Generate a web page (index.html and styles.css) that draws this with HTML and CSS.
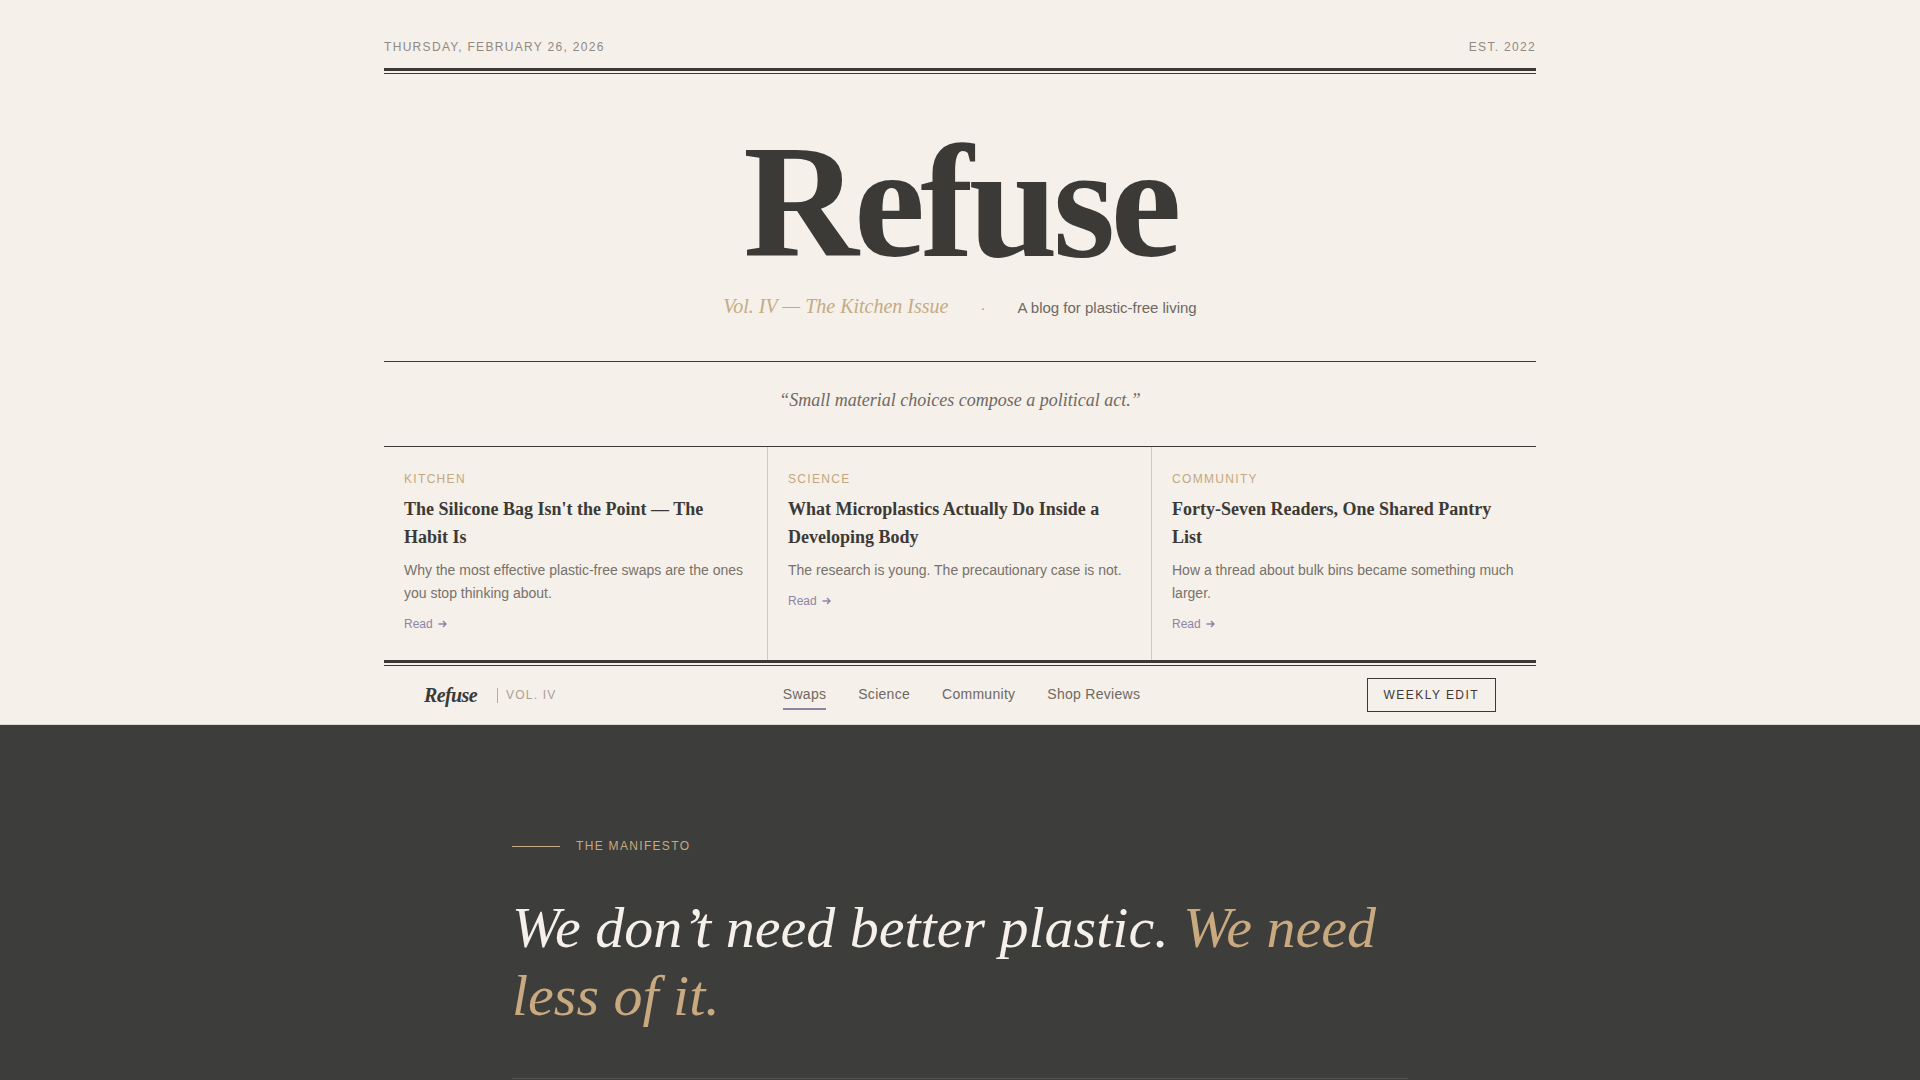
FILE: index.html
```html
<!DOCTYPE html>
<html lang="en">
<head>
  <meta charset="UTF-8" />
  <meta name="viewport" content="width=device-width, initial-scale=1.0" />
  <title>Refuse — A blog for plastic-free living</title>
  <link rel="stylesheet" href="styles.css">
</head>
<body>

  <header class="masthead">
    <div class="wrap">
      <div class="topline">
        <span>Thursday, February 26, 2026</span>
        <span>Est. 2022</span>
      </div>
      <div class="double-rule"></div>

      <h1 class="title">Refuse</h1>
      <p class="subtitle">
        <em class="issue">Vol. IV — The Kitchen Issue</em>
        <span class="dot">·</span>
        <span class="tagline">A blog for plastic-free living</span>
      </p>

      <p class="motto">“Small material choices compose a political act.”</p>

      <div class="featured">
        <article class="story">
          <span class="kicker">Kitchen</span>
          <h3>The Silicone Bag Isn't the Point — The Habit Is</h3>
          <p>Why the most effective plastic-free swaps are the ones you stop thinking about.</p>
          <a href="#" class="read">Read <svg class="arrow" viewBox="0 0 10 8" width="10" height="8"><path d="M0.5 4h7M5 1l3 3-3 3" fill="none" stroke="currentColor" stroke-width="1.4"/></svg></a>
        </article>
        <article class="story">
          <span class="kicker">Science</span>
          <h3>What Microplastics Actually Do Inside a Developing Body</h3>
          <p>The research is young. The precautionary case is not.</p>
          <a href="#" class="read">Read <svg class="arrow" viewBox="0 0 10 8" width="10" height="8"><path d="M0.5 4h7M5 1l3 3-3 3" fill="none" stroke="currentColor" stroke-width="1.4"/></svg></a>
        </article>
        <article class="story">
          <span class="kicker">Community</span>
          <h3>Forty-Seven Readers, One Shared Pantry List</h3>
          <p>How a thread about bulk bins became something much larger.</p>
          <a href="#" class="read">Read <svg class="arrow" viewBox="0 0 10 8" width="10" height="8"><path d="M0.5 4h7M5 1l3 3-3 3" fill="none" stroke="currentColor" stroke-width="1.4"/></svg></a>
        </article>
      </div>
      <div class="double-rule"></div>
    </div>
  </header>

  <nav class="navbar">
    <div class="wrap nav-inner">
      <div class="brand">
        <span class="brand-name">Refuse</span>
        <span class="brand-vol">Vol. IV</span>
      </div>
      <ul class="nav-links">
        <li><a href="#" class="active">Swaps</a></li>
        <li><a href="#">Science</a></li>
        <li><a href="#">Community</a></li>
        <li><a href="#">Shop Reviews</a></li>
      </ul>
      <a href="#" class="btn-outline">Weekly Edit</a>
    </div>
  </nav>

  <section class="manifesto">
    <div class="manifesto-inner">
      <div class="eyebrow">The Manifesto</div>
      <h2>We don’t need better plastic. <span>We need less of it.</span></h2>
      <div class="thin-rule"></div>
    </div>
  </section>

</body>
</html>
```
FILE: styles.css
```css
* {
  box-sizing: border-box;
}

body {
  margin: 0;
  background: #f5f0e9;
  color: #3b3a37;
  font-family: "Liberation Sans", Arial, sans-serif;
}

a {
  text-decoration: none;
  color: inherit;
}

.wrap {
  max-width: 1152px;
  margin: 0 auto;
}

/* masthead */
.masthead .wrap {
  padding-top: 40px;
}

.topline {
  display: flex;
  justify-content: space-between;
  font-size: 12px;
  line-height: 14px;
  letter-spacing: 0.11em;
  text-transform: uppercase;
  color: #8f8a83;
  margin-bottom: 14px;
}

.double-rule {
  height: 2px;
  border-top: 3px solid #3b3a37;
  border-bottom: 1px solid #3b3a37;
  box-sizing: content-box;
}

.title {
  margin: 48px 0 0;
  font-family: "Liberation Serif", "Times New Roman", serif;
  font-weight: bold;
  font-size: 160px;
  line-height: 160px;
  letter-spacing: -0.03em;
  text-align: center;
  color: #3b3a37;
}

.subtitle {
  display: flex;
  justify-content: center;
  align-items: baseline;
  gap: 32px;
  margin: 10px 0 0;
  padding-bottom: 39px;
  line-height: 28px;
}

.issue {
  font-family: "Liberation Serif", "Times New Roman", serif;
  font-size: 20px;
  color: #c4ab86;
}

.dot {
  font-size: 15px;
  color: #a09a92;
}

.tagline {
  font-size: 15px;
  color: #6e6963;
}

.motto {
  margin: 0;
  padding: 24px 0 32px;
  border-top: 1px solid #3b3a37;
  border-bottom: 1px solid #3b3a37;
  font-family: "Liberation Serif", "Times New Roman", serif;
  font-style: italic;
  font-size: 18px;
  line-height: 28px;
  text-align: center;
  color: #6e6963;
}

/* featured stories */
.featured {
  display: grid;
  grid-template-columns: repeat(3, 1fr);
}

.story {
  padding: 24px 20px 27px;
  border-right: 1px solid #cfc9bf;
}

.story:last-child {
  border-right: none;
}

.kicker {
  display: block;
  font-size: 12px;
  line-height: 16px;
  letter-spacing: 0.11em;
  text-transform: uppercase;
  color: #c2a880;
}

.story h3 {
  margin: 8px 0 0;
  font-family: "Liberation Serif", "Times New Roman", serif;
  font-size: 18px;
  line-height: 28px;
  font-weight: bold;
  color: #3b3a37;
}

.story p {
  margin: 8px 0 0;
  font-size: 14px;
  line-height: 23px;
  color: #77726c;
}

.read {
  display: inline-flex;
  align-items: center;
  gap: 5px;
  margin-top: 10px;
  font-size: 12px;
  line-height: 18px;
  color: #8e84a8;
}

.arrow {
  display: block;
}

/* nav */
.navbar {
  border-bottom: 1px solid #dcd6cc;
}

.nav-inner {
  display: flex;
  align-items: center;
  justify-content: space-between;
  padding: 12px 40px;
}

.brand {
  display: flex;
  align-items: center;
  gap: 20px;
}

.brand-name {
  font-family: "Liberation Serif", "Times New Roman", serif;
  font-weight: bold;
  font-style: italic;
  font-size: 20px;
  letter-spacing: -0.03em;
  color: #3b3a37;
}

.brand-vol {
  border-left: 1px solid #c4ab86;
  padding-left: 8px;
  font-size: 12px;
  line-height: 15px;
  letter-spacing: 0.1em;
  text-transform: uppercase;
  color: #a8a29a;
}

.nav-links {
  display: flex;
  gap: 32px;
  list-style: none;
  margin: 0;
  padding: 0;
}

.nav-links a {
  display: block;
  padding: 4px 0;
  border-bottom: 2px solid transparent;
  font-size: 14px;
  line-height: 20px;
  letter-spacing: 0.02em;
  color: #6e6963;
}

.nav-links a.active {
  border-bottom-color: #8e84a8;
}

.btn-outline {
  display: inline-block;
  padding: 8px 16px;
  border: 1px solid #3b3a37;
  font-size: 12px;
  line-height: 16px;
  letter-spacing: 0.12em;
  text-transform: uppercase;
  color: #3b3a37;
}

/* manifesto */
.manifesto {
  background: #3d3d3c;
  padding: 113px 0 112px;
}

.manifesto-inner {
  max-width: 896px;
  margin: 0 auto;
}

.eyebrow {
  display: flex;
  align-items: center;
  gap: 16px;
  font-size: 12px;
  line-height: 16px;
  letter-spacing: 0.11em;
  text-transform: uppercase;
  color: #c9a97f;
}

.eyebrow::before {
  content: "";
  width: 48px;
  height: 1px;
  background: #c9a97f;
}

.manifesto h2 {
  margin: 40px 0 0;
  font-family: "Liberation Serif", "Times New Roman", serif;
  font-style: italic;
  font-weight: normal;
  font-size: 58px;
  line-height: 68px;
  color: #f5f0e9;
}

.manifesto h2 span {
  color: #c9a97f;
}

.thin-rule {
  margin-top: 48px;
  height: 1px;
  background: #575553;
}
```
